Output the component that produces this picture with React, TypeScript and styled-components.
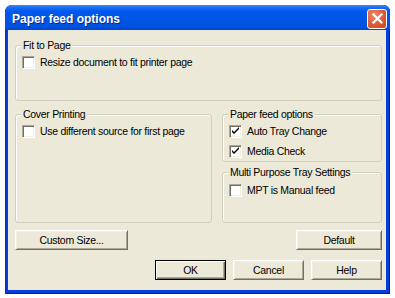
import React from 'react';
import styled, { createGlobalStyle } from 'styled-components';

const GlobalStyle = createGlobalStyle`
  html, body {
    margin: 0;
    background: #ffffff;
  }
  body {
    font-family: 'Liberation Sans', Arial, sans-serif;
  }
`;

export default () => {
  return (
    <>
      <GlobalStyle />
      <Window>
        <TitleBar>
          <Title>Paper feed options</Title>
          <CloseButton aria-label="Close">
            <svg width="11" height="11" viewBox="0 0 11 11">
              <path d="M1.5 1.5 L9.5 9.5 M9.5 1.5 L1.5 9.5" stroke="#fff" strokeWidth="2.2" strokeLinecap="square" />
            </svg>
          </CloseButton>
        </TitleBar>
        <Client>
          <Group height={56}>
            <GroupTitle>Fit to Page</GroupTitle>
            <Check label="Resize document to fit printer page" top={4} />
          </Group>
          <Middle>
            <Group>
              <GroupTitle>Cover Printing</GroupTitle>
              <Check label="Use different source for first page" top={4} />
            </Group>
            <Side>
              <Group height={48}>
                <GroupTitle>Paper feed options</GroupTitle>
                <Check label="Auto Tray Change" top={4} checked />
                <Check label="Media Check" top={7} checked />
              </Group>
              <Group grow>
                <GroupTitle>Multi Purpose Tray Settings</GroupTitle>
                <Check label="MPT is Manual feed" top={5} />
              </Group>
            </Side>
          </Middle>
          <ButtonRow top={7} spread>
            <Button width={113}>Custom Size...</Button>
            <Button width={86}>Default</Button>
          </ButtonRow>
          <ButtonRow top={10}>
            <Button width={71} primary>OK</Button>
            <Button width={71}>Cancel</Button>
            <Button width={71}>Help</Button>
          </ButtonRow>
        </Client>
      </Window>
    </>
  );
};

const Check = ({ label, top, checked }: { label: string; top: number; checked?: boolean }) => (
  <CheckRow top={top}>
    <CheckBox>
      {checked && (
        <svg width="9" height="9" viewBox="0 0 9 9">
          <path d="M1 3 L1 5 L3 7 L8 2 L8 0 L3 5 Z" fill="#000" />
        </svg>
      )}
    </CheckBox>
    <CheckLabel>{label}</CheckLabel>
  </CheckRow>
);

const Window = styled.div`
  margin: 5px 0 0 5px;
  width: 385px;
  display: flex;
  flex-direction: column;
  border-radius: 7px 7px 0 0;
  background: #0b3bd8;
  box-shadow: inset 1px 0 0 #0831b0, inset -1px 0 0 #001ea0, inset 0 -1px 0 #001ea0;
`;

const TitleBar = styled.div`
  height: 25px;
  display: flex;
  align-items: center;
  justify-content: space-between;
  padding: 2px 3px 0 7px;
  box-sizing: border-box;
  border-radius: 7px 7px 0 0;
  background: linear-gradient(
    180deg,
    #3d8af7 0%,
    #1a6ff5 10%,
    #0058ee 25%,
    #0055e5 60%,
    #0052e0 85%,
    #0046cc 100%
  );
`;

const Title = styled.span`
  font-family: 'Liberation Sans', Arial, sans-serif;
  font-size: 12px;
  font-weight: bold;
  color: #ffffff;
  text-shadow: 1px 1px 0 #0a2a8a;
`;

const CloseButton = styled.button`
  width: 20px;
  height: 20px;
  padding: 0;
  display: flex;
  align-items: center;
  justify-content: center;
  border: 1px solid #ffffff;
  border-radius: 3px;
  background: radial-gradient(circle at 35% 30%, #f0906e 0%, #e2603a 45%, #c8451c 100%);
`;

const Client = styled.div`
  margin: 0 4px 4px 3px;
  padding: 15px 4px 10px 7px;
  background: #ece9d8;
  display: flex;
  flex-direction: column;
  font-size: 10.5px;
  letter-spacing: -0.3px;
  color: #000000;
`;

const Group = styled.div<{ height?: number; grow?: boolean }>`
  box-sizing: border-box;
  height: ${({ height }) => (height ? `${height}px` : 'auto')};
  flex: ${({ grow }) => (grow ? 1 : 'none')};
  display: flex;
  flex-direction: column;
  border: 1px solid #d0d0bf;
  border-radius: 3px;
  box-shadow: inset 1px 1px 0 #ffffff;
  padding: 0 6px;
`;

const GroupTitle = styled.span`
  align-self: flex-start;
  margin: -7px 0 0 -1px;
  padding: 0 2px;
  line-height: 13px;
  background: #ece9d8;
`;

const Middle = styled.div`
  margin-top: 13px;
  height: 109px;
  display: grid;
  grid-template-columns: 197px 1fr;
  gap: 10px;
`;

const Side = styled.div`
  display: flex;
  flex-direction: column;
  gap: 10px;
`;

const CheckRow = styled.div<{ top: number }>`
  margin-top: ${({ top }) => top}px;
  height: 13px;
  display: flex;
  align-items: center;
  gap: 5px;
`;

const CheckBox = styled.span`
  box-sizing: border-box;
  width: 13px;
  height: 13px;
  flex: none;
  display: flex;
  align-items: center;
  justify-content: center;
  background: #ffffff;
  border-style: solid;
  border-width: 1px;
  border-color: #aca899 #ffffff #ffffff #aca899;
  box-shadow: inset 1px 1px 0 #716f64, inset -1px -1px 0 #f1efe2;
`;

const CheckLabel = styled.span`
  line-height: 13px;
  white-space: nowrap;
`;

const ButtonRow = styled.div<{ top: number; spread?: boolean }>`
  margin-top: ${({ top }) => top}px;
  display: flex;
  justify-content: ${({ spread }) => (spread ? 'space-between' : 'flex-end')};
  gap: 7px;
`;

const Button = styled.button<{ width: number; primary?: boolean }>`
  box-sizing: border-box;
  width: ${({ width }) => width}px;
  height: 20px;
  padding: 0;
  font-family: 'Liberation Sans', Arial, sans-serif;
  font-size: 10.5px;
  letter-spacing: -0.3px;
  color: #000000;
  background: #ece9d8;
  border-style: solid;
  border-width: 1px;
  border-color: ${({ primary }) => (primary ? '#000000' : '#ffffff #716f64 #716f64 #ffffff')};
  box-shadow: ${({ primary }) =>
    primary
      ? 'inset 1px 1px 0 #ffffff, inset -1px -1px 0 #716f64, inset -2px -2px 0 #aca899'
      : 'inset 1px 1px 0 #f1efe2, inset -1px -1px 0 #aca899'};
`;
